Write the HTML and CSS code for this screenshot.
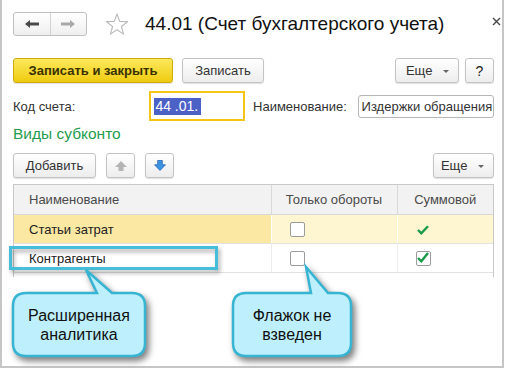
FILE: index.html
```html
<!DOCTYPE html>
<html lang="ru">
<head>
    <meta charset="UTF-8">
    <title>44.01 (Счет бухгалтерского учета)</title>
    <link rel="stylesheet" href="styles.css">
</head>
<body>
    <div class="window">
        <div class="titlebar">
            <div class="nav">
                <span class="nav-btn">
                    <svg width="14" height="8" viewBox="0 0 14 8"><path d="M0 4 L5 0 L5 2.5 L14 2.5 L14 5.5 L5 5.5 L5 8 Z" fill="#4a4a4a"/></svg>
                </span>
                <span class="nav-btn">
                    <svg width="14" height="8" viewBox="0 0 14 8"><path d="M14 4 L9 0 L9 2.5 L0 2.5 L0 5.5 L9 5.5 L9 8 Z" fill="#a8a8a8"/></svg>
                </span>
            </div>
            <svg class="star" width="24" height="23" viewBox="0 0 24 23">
                <path d="M12 1 L14.7 8.4 L22.6 8.6 L16.4 13.5 L18.6 21.1 L12 16.7 L5.4 21.1 L7.6 13.5 L1.4 8.6 L9.3 8.4 Z" fill="none" stroke="#b9b9b9" stroke-width="1.1" stroke-linejoin="round"/>
            </svg>
            <h1 class="title">44.01 (Счет бухгалтерского учета)</h1>
            <svg class="close" width="9" height="9" viewBox="0 0 9 9"><path d="M1 1 L8 8 M8 1 L1 8" stroke="#444" stroke-width="1.4"/></svg>
        </div>

        <div class="toolbar">
            <button class="btn btn-main">Записать и закрыть</button>
            <button class="btn btn-save">Записать</button>
            <button class="btn btn-more">Еще <i class="caret"></i></button>
            <button class="btn btn-help">?</button>
        </div>

        <div class="fields">
            <span class="label label-code">Код счета:</span>
            <div class="code-input"><span class="sel">44 .01.</span></div>
            <span class="label label-name">Наименование:</span>
            <div class="name-input">Издержки обращения</div>
        </div>

        <div class="section">Виды субконто</div>

        <div class="toolbar toolbar-grid">
            <button class="btn btn-add">Добавить</button>
            <button class="btn btn-icon">
                <svg width="12" height="10" viewBox="0 0 12 10"><path d="M6 0 L12 6 L8.5 6 L8.5 10 L3.5 10 L3.5 6 L0 6 Z" fill="#b4b4b4"/></svg>
            </button>
            <button class="btn btn-icon">
                <svg width="12" height="11" viewBox="0 0 12 11"><path d="M6 10.5 L11.5 4.8 L8.3 4.8 L8.3 0.5 L3.7 0.5 L3.7 4.8 L0.5 4.8 Z" fill="#3c93e2" stroke="#1f66b5" stroke-width="0.8" stroke-linejoin="round"/></svg>
            </button>
            <button class="btn btn-more btn-more-grid">Еще <i class="caret"></i></button>
        </div>

        <div class="grid">
            <table>
                <colgroup>
                    <col class="c-name">
                    <col class="c-turn">
                    <col>
                </colgroup>
                <thead>
                    <tr>
                        <th class="th-name">Наименование</th>
                        <th>Только обороты</th>
                        <th>Суммовой</th>
                    </tr>
                </thead>
                <tbody>
                    <tr class="current">
                        <td>Статьи затрат</td>
                        <td><span class="box"></span></td>
                        <td><span class="tick">
                            <svg width="12" height="10" viewBox="0 0 12 10"><path d="M1 5 L4.3 8.3 L11 1.2" fill="none" stroke="#1a9a4a" stroke-width="2.4"/></svg>
                        </span></td>
                    </tr>
                    <tr>
                        <td>Контрагенты</td>
                        <td><span class="box"></span></td>
                        <td><span class="box box-on">
                            <svg width="12" height="11" viewBox="0 0 12 11"><path d="M1 6 L4.3 9.3 L11 1" fill="none" stroke="#1a9a4a" stroke-width="2.4"/></svg>
                        </span></td>
                    </tr>
                </tbody>
            </table>
        </div>

        <!-- выноски поверх формы -->
        <svg class="marks" width="505" height="369" viewBox="0 0 505 369">
            <rect class="mark-frame" x="10.5" y="247.5" width="206" height="21"/>
            <path class="mark-bubble" d="M26 293 L97 293 L86 270 L112 293 L132 293 Q145 293 145 306 L145 343 Q145 356 132 356 L26 356 Q13 356 13 343 L13 306 Q13 293 26 293 Z"/>
            <path class="mark-bubble" d="M246 293 L311 293 L306 267 L328 293 L338 293 Q351 293 351 306 L351 343 Q351 356 338 356 L246 356 Q233 356 233 343 L233 306 Q233 293 246 293 Z"/>
        </svg>
        <div class="note note-1">Расширенная<br>аналитика</div>
        <div class="note note-2">Флажок не<br>взведен</div>
    </div>
</body>
</html>
```

FILE: styles.css
```css
body {
    margin: 0;
    background: #fff;
    font-family: "Liberation Sans", Arial, sans-serif;
    font-size: 13px;
    color: #333;
}
.window {
    position: relative;
    width: 504px;
    height: 368px;
    box-sizing: border-box;
    border: 2px solid #c6c6c6;
    border-top: 0;
    padding: 12px 8px 0 11px;
}
.titlebar {
    display: flex;
    align-items: center;
    height: 24px;
}
.nav {
    display: flex;
    width: 74px;
    height: 24px;
    box-sizing: border-box;
    border: 1px solid #bfbfbf;
    border-radius: 3px;
    background: linear-gradient(#fff, #efefef);
}
.nav-btn {
    flex: 1;
    display: flex;
    align-items: center;
    justify-content: center;
}
.nav-btn:first-child {
    border-right: 1px solid #d2d2d2;
}
.star {
    margin-left: 18px;
}
.title {
    margin: 0 0 0 16px;
    font-size: 19px;
    font-weight: normal;
    color: #111;
}
.close {
    align-self: flex-start;
    margin: 5px -7px 0 auto;
}
.toolbar {
    display: flex;
    align-items: center;
    margin-top: 22px;
    height: 25px;
}
.btn {
    height: 25px;
    box-sizing: border-box;
    border: 1px solid #c3c3c3;
    border-radius: 3px;
    background: linear-gradient(#fff, #ededed);
    box-shadow: 0 1px 1px rgba(0,0,0,0.12);
    font-family: inherit;
    font-size: 13px;
    color: #333;
    padding: 0;
}
.btn-main {
    width: 160px;
    font-weight: bold;
    color: #3a3200;
    border-color: #d0ab0a;
    background: linear-gradient(#fce95c, #efcb10);
}
.btn-save {
    width: 82px;
    margin-left: 9px;
}
.btn-more {
    width: 64px;
    margin-left: auto;
    text-align: right;
    padding-right: 9px;
}
.caret {
    display: inline-block;
    margin-left: 7px;
    vertical-align: middle;
    border-left: 3px solid transparent;
    border-right: 3px solid transparent;
    border-top: 3px solid #666;
}
.btn-help {
    width: 29px;
    margin-left: 6px;
    font-size: 14px;
    color: #222;
}
.fields {
    display: flex;
    align-items: center;
    height: 30px;
    margin-top: 8px;
}
.label {
    color: #333;
}
.label-code {
    width: 137px;
}
.code-input {
    width: 96px;
    height: 30px;
    box-sizing: border-box;
    border: 2px solid #f6c417;
    padding-left: 3px;
    display: flex;
    align-items: center;
}
.sel {
    background: #4c61c6;
    color: #fff;
    padding: 1px 3px 1px 1px;
    line-height: 15px;
    font-size: 14px;
}
.label-name {
    margin-left: 8px;
    width: 105px;
}
.name-input {
    width: 137px;
    height: 23px;
    box-sizing: border-box;
    border: 1px solid #b6b6b6;
    border-radius: 3px;
    padding: 0 3px;
    line-height: 21px;
    white-space: nowrap;
    overflow: hidden;
    color: #333;
}
.section {
    margin-top: 3px;
    font-size: 15.5px;
    line-height: 20px;
    color: #1f9c4e;
}
.toolbar-grid {
    margin-top: 9px;
}
.btn-add {
    width: 83px;
}
.btn-icon {
    width: 29px;
    margin-left: 10px;
    display: flex;
    align-items: center;
    justify-content: center;
}
.btn-more-grid {
    width: 61px;
}
.grid {
    margin-top: 6px;
    height: 93px;
    box-sizing: border-box;
    border: 1px solid #c9c9c9;
    border-bottom: 0;
}
table {
    width: 100%;
    border-collapse: collapse;
    table-layout: fixed;
}
.c-name {
    width: 257px;
}
.c-turn {
    width: 126px;
}
th {
    height: 29px;
    padding: 0;
    background: #f2f2f2;
    font-weight: normal;
    color: #4a4a4a;
    border-right: 1px solid #d8d8d8;
    border-bottom: 1px solid #d8d8d8;
}
th:last-child,
td:last-child {
    border-right: 0;
}
.th-name {
    text-align: left;
    padding-left: 15px;
}
td {
    height: 28px;
    padding: 0 0 0 18px;
    border-bottom: 1px solid #e2e2e2;
    border-right: 1px solid #ececec;
    color: #222;
}
td:first-child {
    padding-left: 15px;
}
.current td {
    background: #fdf6d0;
    border-right-color: #fff;
}
.current td:first-child {
    background: #fbe8a3;
}
.box {
    display: inline-flex;
    align-items: center;
    justify-content: center;
    width: 15px;
    height: 15px;
    box-sizing: border-box;
    border: 1px solid #9c9c9c;
    border-radius: 2px;
    background: #fff;
    vertical-align: middle;
}
.box-on svg {
    margin-top: -3px;
}
.tick {
    display: inline-flex;
    width: 15px;
    justify-content: center;
    vertical-align: middle;
}
.marks {
    position: absolute;
    left: -2px;
    top: 0;
    pointer-events: none;
}
.mark-frame {
    fill: none;
    stroke: #47bed9;
    stroke-width: 3;
    filter: drop-shadow(2px 3px 2px rgba(0,0,0,0.35));
}
.mark-bubble {
    fill: #bdf0fc;
    stroke: #36b4d2;
    stroke-width: 2.5;
    filter: drop-shadow(3px 4px 3px rgba(0,0,0,0.5));
}
.note {
    position: absolute;
    top: 293px;
    height: 63px;
    display: flex;
    align-items: center;
    justify-content: center;
    text-align: center;
    font-size: 16px;
    line-height: 19px;
    color: #111;
}
.note-1 {
    left: 11px;
    width: 132px;
}
.note-2 {
    left: 231px;
    width: 118px;
}
```
